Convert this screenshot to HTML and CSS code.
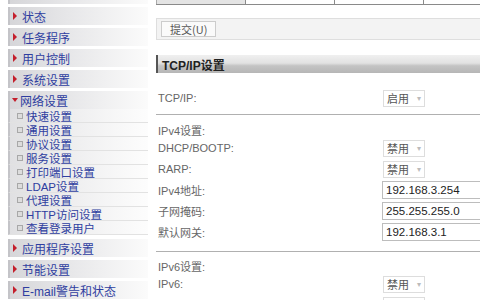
FILE: index.html
```html
<!DOCTYPE html>
<html>
<head>
<meta charset="utf-8">
<link rel="stylesheet" href="styles.css">
</head>
<body>
<div class="page">
  <nav class="side">
    <div class="item cut"><span class="tri"></span>&nbsp;</div>
    <div class="item"><span class="tri"></span>状态</div>
    <div class="item"><span class="tri"></span>任务程序</div>
    <div class="item"><span class="tri"></span>用户控制</div>
    <div class="item"><span class="tri"></span>系统设置</div>
    <div class="item open"><span class="tri down"></span>网络设置</div>
    <div class="subs">
      <div class="sub"><span class="bul"></span>快速设置</div>
      <div class="sub"><span class="bul"></span>通用设置</div>
      <div class="sub"><span class="bul"></span>协议设置</div>
      <div class="sub"><span class="bul"></span>服务设置</div>
      <div class="sub"><span class="bul"></span>打印端口设置</div>
      <div class="sub"><span class="bul"></span>LDAP设置</div>
      <div class="sub"><span class="bul"></span>代理设置</div>
      <div class="sub"><span class="bul"></span>HTTP访问设置</div>
      <div class="sub"><span class="bul"></span>查看登录用户</div>
    </div>
    <div class="item after"><span class="tri"></span>应用程序设置</div>
    <div class="item"><span class="tri"></span>节能设置</div>
    <div class="item"><span class="tri"></span>E-mail警告和状态</div>
  </nav>
  <main class="main">
    <div class="tabs">
      <div class="tab first"></div>
      <div class="tab"></div>
      <div class="tab"></div>
      <div class="tab last"></div>
    </div>
    <div class="submitbar"><button class="btn">提交(U)</button></div>
    <h2 class="head">TCP/IP设置</h2>
    <div class="row r1"><span class="lbl">TCP/IP:</span><span class="sel">启用<i>▾</i></span></div>
    <hr class="sep">
    <div class="row cap"><span class="lbl">IPv4设置:</span></div>
    <div class="row"><span class="lbl">DHCP/BOOTP:</span><span class="sel">禁用<i>▾</i></span></div>
    <div class="row"><span class="lbl">RARP:</span><span class="sel">禁用<i>▾</i></span></div>
    <div class="row"><span class="lbl">IPv4地址:</span><span class="inp">192.168.3.254</span></div>
    <div class="row"><span class="lbl">子网掩码:</span><span class="inp">255.255.255.0</span></div>
    <div class="row"><span class="lbl">默认网关:</span><span class="inp">192.168.3.1</span></div>
    <hr class="sep sep2">
    <div class="row cap"><span class="lbl">IPv6设置:</span></div>
    <div class="row"><span class="lbl">IPv6:</span><span class="sel">禁用<i>▾</i></span></div>
    <div class="row"><span class="lbl">DHCPv6:</span><span class="sel">启用<i>▾</i></span></div>
  </main>
</div>
</body>
</html>
```
FILE: styles.css
```css
html, body { margin: 0; padding: 0; background: #fff; overflow: hidden; }
body { width: 480px; height: 300px; font-family: "Liberation Sans", "Noto Sans CJK SC", sans-serif; }
.page { display: flex; align-items: flex-start; }

.side { width: 140px; margin-left: 8px; margin-top: -14px; flex: none; display: flex; flex-direction: column; }
.item { height: 18px; margin-bottom: 3px; display: flex; align-items: center; font-size: 12px; color: #2f3ea0;
  background: linear-gradient(to right, #d6d6d9 0%, #e6e6e8 40%, #fbfbfb 100%);
  border-left: 2px solid #c4c4c8; box-sizing: border-box; padding-left: 3px; }
.item.open { margin-bottom: 0; }
.item.after { margin-top: 4px; }
.tri { width: 0; height: 0; border-top: 4px solid transparent; border-bottom: 4px solid transparent; border-left: 4px solid #c41f2c; margin-right: 5px; }
.tri.down { border-left: 3px solid transparent; border-right: 3px solid transparent; border-top: 4px solid #c41f2c; border-bottom: 0; margin-right: 2px; margin-left: -1px; }
.subs { display: flex; flex-direction: column; }
.sub { height: 14px; display: flex; align-items: center; font-size: 11.5px; color: #2f3ea0; box-sizing: border-box;
  border-bottom: 1px solid #e2e2e2; border-left: 2px solid #c4c4c8;
  background: linear-gradient(to right, #e0e0e2 0%, #ededee 40%, #fdfdfd 100%); padding-left: 7px; }
.bul { width: 4px; height: 4px; border: 1px solid #a8a8a8; background: #dcdcdc; margin-right: 3px; }

.main { flex: 1; margin-left: 8px; display: flex; flex-direction: column; min-width: 0; }
.tabs { display: flex; height: 18px; margin-top: -14px; border-bottom: 1px solid #8a8a8a; }
.tab { width: 88px; border-right: 1px solid #8a8a8a; flex: none; }
.tab.first { width: 88px; background: #e4e4e4; border-left: 1px solid #aaa; }
.tab.last { flex: 1; border-right: 0; }
.submitbar { margin-top: 13px; height: 20px; background: #f3f3f3; border: 1px solid #dedede; border-right: 0; display: flex; align-items: center; padding-left: 4px; }
.btn { font-family: "Noto Sans CJK SC", "Liberation Sans", sans-serif; font-size: 11px; color: #555; background: #fafafa; border: 1px solid #ccc; height: 16px; padding: 0 8px; line-height: 14px; }
.head { margin: 15px 0 0 0; height: 18px; font-size: 12px; font-weight: bold; color: #222; display: flex; align-items: center; padding-left: 4px;
  border-left: 2px solid #555; box-sizing: border-box;
  background: linear-gradient(to bottom, #f0f0f0 0%, #e2e2e2 45%, #c4c4c4 60%, #b6b6b6 100%); }

.row { display: flex; align-items: center; height: 20px; margin-bottom: 1px; padding-left: 2px; font-size: 11px; color: #666; }
.row.r1 { margin-top: 15px; }
.row.cap { height: 15px; }
.lbl { width: 225px; flex: none; }
.sel { display: flex; align-items: center; height: 15px; padding: 0 3px 0 3px; border: 1px solid #ddd; color: #555; font-size: 11px; background: #fff; }
.sel i { font-style: normal; color: #bbb; font-size: 8px; margin-left: 8px; }
.inp { display: flex; align-items: center; height: 16px; flex: 1; margin-left: -1px; border: 1px solid #bdbdbd; border-right: 0; padding-left: 3px; font-size: 11.5px; color: #222; }
.sep { border: 0; border-top: 1px solid #b0b0b0; margin: 5px 0 7px 0; height: 0; }
.sep2 { margin: 8px 0 6px 0; }
```
